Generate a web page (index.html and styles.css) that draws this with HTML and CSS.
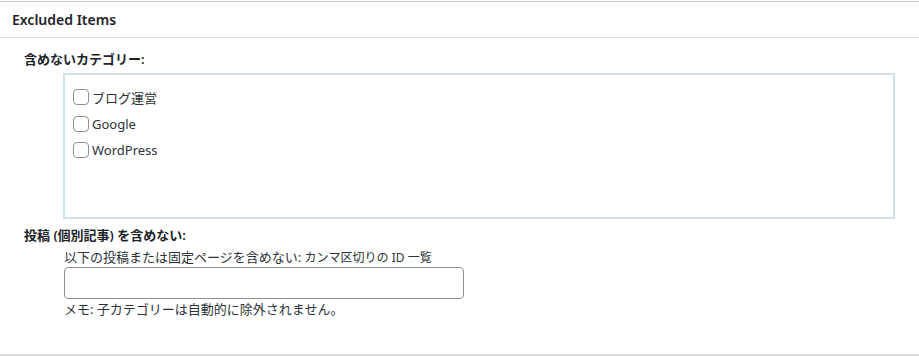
FILE: index.html
```html
<!DOCTYPE html>
<html lang="ja">
<head>
<meta charset="utf-8">
<title>Excluded Items</title>
<link rel="stylesheet" href="styles.css">
</head>
<body>
<div class="postbox">
  <div class="postbox-header">
    <h2 class="hndle">Excluded Items</h2>
  </div>
  <div class="inside">
    <div class="field-label">含めないカテゴリー:</div>
    <div class="cat-box">
      <label class="cat-row"><input type="checkbox" class="cb"><span>ブログ運営</span></label>
      <label class="cat-row"><input type="checkbox" class="cb"><span>Google</span></label>
      <label class="cat-row"><input type="checkbox" class="cb"><span>WordPress</span></label>
    </div>
    <div class="field-label second">投稿 (個別記事) を含めない:</div>
    <div class="field-body">
      <div class="desc">以下の投稿または固定ページを含めない: <span class="small">カンマ区切りの ID 一覧</span></div>
      <input type="text" class="text-input">
      <div class="note">メモ: 子カテゴリーは自動的に除外されません。</div>
    </div>
  </div>
</div>
</body>
</html>
```

FILE: styles.css
```css
html, body {
  margin: 0;
  padding: 0;
  background: #ffffff;
}

body {
  font-family: "Noto Sans", "Noto Sans CJK JP", sans-serif;
  font-size: 13px;
  color: #1d2327;
}

.postbox {
  margin-top: 1px;
  border-top: 1px solid #c3c4c7;
  border-bottom: 2px solid #dcdcde;
}

.postbox-header {
  height: 35px;
  border-bottom: 1px solid #dcdcde;
  display: flex;
  align-items: center;
  padding-left: 12px;
}

.hndle {
  margin: 0;
  font-size: 14px;
  font-weight: 600;
  line-height: 1.4;
  color: #1d2327;
}

.inside {
  padding: 11px 0 0 24px;
  height: 316px;
  box-sizing: border-box;
}

.field-label {
  font-weight: 600;
  line-height: 20px;
  color: #1d2327;
}

.field-label.second {
  margin-top: 6px;
}

.cat-box {
  margin: 4px 0 0 39px;
  width: 832px;
  height: 146px;
  box-sizing: border-box;
  border: 2px solid #cfe1ef;
  padding: 9px 8px 0 8px;
}

.cat-row {
  display: flex;
  align-items: center;
  height: 26.5px;
  color: #2c3338;
}

.cb {
  appearance: none;
  -webkit-appearance: none;
  width: 16px;
  height: 16px;
  margin: 0 3px 0 0;
  border: 1px solid #8c8f94;
  border-radius: 4px;
  background: #fff;
  box-sizing: border-box;
}

.field-body {
  margin-left: 40px;
  color: #2c3338;
}

.desc {
  line-height: 19px;
  margin-top: 3px;
}

.desc .small {
  font-size: 12px;
}

.text-input {
  display: block;
  width: 400px;
  height: 32px;
  box-sizing: border-box;
  margin: 0;
  border: 1px solid #8c8f94;
  border-radius: 4px;
  background: #fff;
  padding: 0 8px;
}

.note {
  line-height: 20px;
}
```
